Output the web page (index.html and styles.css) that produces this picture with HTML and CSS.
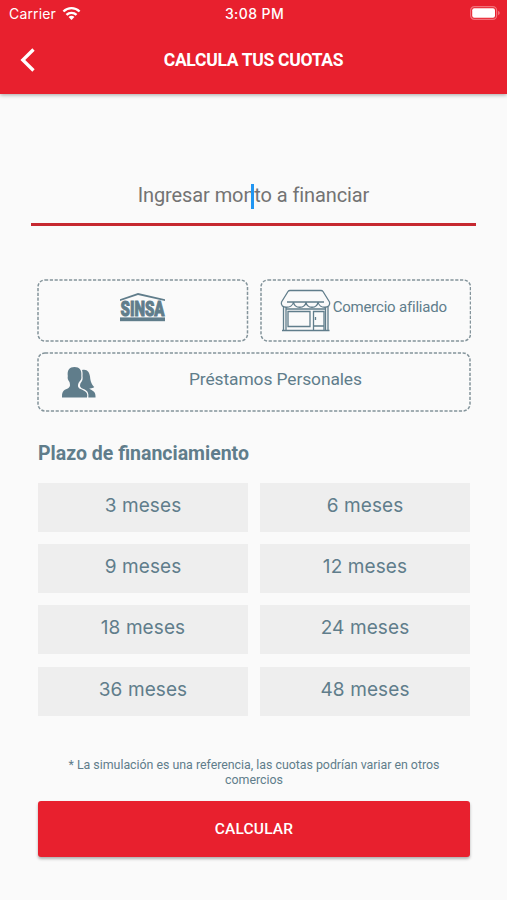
FILE: index.html
```html
<!DOCTYPE html>
<html lang="es">
<head>
    <meta charset="UTF-8">
    <meta name="viewport" content="width=device-width, initial-scale=1.0">
    <title>Calcula tus cuotas</title>
    <link rel="stylesheet" href="styles.css">
</head>
<body>
    <header class="header">
        <div class="status">
            <div class="carrier">
                <span>Carrier</span>
                <svg class="wifi" viewBox="0 0 20 15" fill="none" stroke="#fff" stroke-width="2.5">
                    <path d="M1.500 5.400C6.300 .7 13.700 .7 18.500 5.400"/>
                    <path d="M4.700 9C7.700 6.100 12.300 6.100 15.300 9"/>
                    <path d="M10 14.300L6.900 11.200Q10 8.700 13.100 11.200Z" fill="#fff" stroke="none"/>
                </svg>
            </div>
            <div class="time">3:08 PM</div>
            <svg class="battery" viewBox="0 0 30 14">
                <rect x=".6" y=".6" width="26" height="12.800" rx="3.800" fill="none" stroke="#f2707a" stroke-width="1.200"/>
                <rect x="2.200" y="2.200" width="22.800" height="9.600" rx="2" fill="#fff"/>
                <path d="M28 4.800Q29.800 5.500 29.800 7T28 9.200Z" fill="#f2707a"/>
            </svg>
        </div>
        <div class="titlebar">
            <svg class="back" viewBox="0 0 16 24" fill="none" stroke="#fff" stroke-width="3.300">
                <path d="M13.500 1.500L2.800 12L13.500 22.500"/>
            </svg>
            <h1>CALCULA TUS CUOTAS</h1>
        </div>
    </header>

    <main>
        <div class="monto">
            <span>Ingresar monto a financiar</span>
            <i class="cursor"></i>
        </div>

        <div class="tipos">
            <div class="tipo">
                <svg class="borde"><rect x="1" y="1" rx="7"/></svg>
                <svg class="sinsa" viewBox="0 0 46 29" fill="#607d8b">
                    <path d="M0 6.200L18 0L45 6.200V8L18 1.900L0 8Z"/>
                    <text x=".5" y="23.200" textLength="44" lengthAdjust="spacingAndGlyphs">SINSA</text>
                    <rect y="24.400" width="45" height="3.800"/>
                </svg>
            </div>
            <div class="tipo comercio">
                <svg class="borde"><rect x="1" y="1" rx="7"/></svg>
                <svg class="tienda" viewBox="0 0 51 43" fill="none" stroke="#607d8b" stroke-width="1.300">
                    <path d="M1.500 13L8 2.500Q8.700 1.500 10 1.500H41Q42.300 1.500 43 2.500L49.500 13M7 13H44"/>
                    <path d="M1.500 13C-.5 20 12.500 20 13.500 13C14.500 20 25 20 26 13C27 20 37 20 38 13C39 20 51.500 20 49.500 13"/>
                    <path d="M3.500 18V41.500M6 18V41.500M45.500 18V41.500M48 18V41.500M2 41.500H49.500M6 20H45.500"/>
                    <path d="M8 22.500H30V37.500H8ZM33.500 41V22.500H44V41M33.500 37H44M35.500 28V31"/>
                </svg>
                <span>Comercio afiliado</span>
            </div>
            <div class="tipo ancho">
                <svg class="borde"><rect x="1" y="1" rx="7"/></svg>
                <svg class="personas" viewBox="0 0 34 31" fill="#607d8b">
                    <path d="M12.500 0C7.500 0 5 3 5.800 9C5.200 12 6.300 13.500 7.500 15C8.200 18 8.500 19.500 6.500 21C3 23 0 23 0 29.500V30.500H25C26.500 25 22 23.500 18.500 22C15.500 20.500 15.500 18.500 16.800 15.500C18.300 13.500 20 12 19.300 9C20 3 17.500 0 12.500 0Z"/>
                    <path d="M20 3C25 1.500 27.500 5 28 9.500C28.500 15 30 18 32.300 20C30.500 21.500 28.500 21.500 27.500 21.300C28 23.500 33.500 23 33.500 29V30.500H26.300C27 25.500 25 23.200 21.500 22C18 20.500 17.500 19.500 18.500 16.300C20.500 14 21 12 20.500 9C20.800 6.500 20.500 4.500 20 3Z"/>
                </svg>
                <span>Préstamos Personales</span>
            </div>
        </div>

        <h2>Plazo de financiamiento</h2>
        <div class="plazos">
            <div class="plazo">3 meses</div>
            <div class="plazo">6 meses</div>
            <div class="plazo">9 meses</div>
            <div class="plazo">12 meses</div>
            <div class="plazo">18 meses</div>
            <div class="plazo">24 meses</div>
            <div class="plazo">36 meses</div>
            <div class="plazo">48 meses</div>
        </div>

        <p class="nota">* La simulación es una referencia, las cuotas podrían variar en otros comercios</p>
        <button class="calcular">CALCULAR</button>
    </main>
</body>
</html>
```
FILE: styles.css
```css
* {
    box-sizing: border-box;
}
body {
    margin: 0;
    height: 900px;
    background-color: #fafafa;
    color: #607d8b;
    font-family: Roboto, sans-serif;
}
.header {
    height: 94px;
    background-color: #e8202e;
    color: white;
    box-shadow: 0 1px 4px rgba(0, 0, 0, 0.35);
}
.status {
    display: grid;
    grid-template-columns: 1fr auto 1fr;
    align-items: center;
    height: 26px;
    padding: 0 7px 0 9px;
    font-family: Inter, sans-serif;
    font-size: 14px;
}
.carrier {
    display: flex;
    align-items: center;
    gap: 6px;
    letter-spacing: 0.15px;
}
.wifi {
    width: 19px;
    height: 15px;
}
.time {
    font-weight: 500;
    letter-spacing: 0.4px;
}
.battery {
    width: 30px;
    height: 14px;
    justify-self: end;
}
.titlebar {
    display: grid;
    grid-template-columns: 16px 1fr 16px;
    align-items: center;
    height: 67px;
    padding: 0 20px;
}
.back {
    width: 16px;
    height: 24px;
}
h1 {
    margin: 0;
    text-align: center;
    font-size: 17.5px;
    font-weight: 700;
    letter-spacing: -0.3px;
}
main {
    padding: 76px 36px 0 37px;
}
.monto {
    position: relative;
    height: 56px;
    margin: 0 -5px 0 -6px;
    padding: 13px 0 0;
    border-bottom: 3px solid #c62830;
    text-align: center;
    color: #737373;
    font-size: 20px;
    line-height: 24px;
    letter-spacing: -0.1px;
}
.cursor {
    position: absolute;
    left: 220px;
    top: 14px;
    width: 3px;
    height: 25px;
    background-color: #2196f3;
}
.tipos {
    display: grid;
    grid-template-columns: 1fr 1fr;
    grid-template-rows: 63px 60px;
    gap: 10px 11px;
    margin-top: 53px;
}
.tipo {
    position: relative;
    display: flex;
    align-items: center;
    justify-content: center;
    font-size: 15px;
    letter-spacing: -0.2px;
}
/* borde punteado */
.borde {
    position: absolute;
    top: 0;
    left: 0;
    width: 100%;
    height: 100%;
}
.borde rect {
    width: calc(100% - 2px);
    height: calc(100% - 2px);
    fill: none;
    stroke: #84949b;
    stroke-width: 1.5px;
    stroke-dasharray: 3.2 1.6;
}
.sinsa {
    width: 46px;
    height: 29px;
    margin-bottom: 7px;
    overflow: visible;
}
.sinsa text {
    font: 900 21px Roboto, sans-serif;
    letter-spacing: 0;
    stroke: #607d8b;
    stroke-width: 1px;
}
.comercio {
    padding-right: 4px;
}
.tienda {
    width: 51px;
    height: 43px;
    margin-right: 2px;
}
.tipo span {
    margin-bottom: 6px;
}
.comercio span {
    margin-bottom: 8px;
}
.ancho {
    grid-column: 1 / 3;
    justify-content: flex-start;
    padding-left: 25px;
    font-size: 17.4px;
    letter-spacing: -0.1px;
}
.personas {
    width: 34px;
    height: 31px;
    margin-right: 93px;
}
h2 {
    margin: 29.5px 0 17.5px 1px;
    font-size: 19.5px;
    line-height: 24px;
    font-weight: 700;
}
.plazos {
    display: grid;
    grid-template-columns: 1fr 1fr;
    grid-auto-rows: 49px;
    gap: 12.2px 12px;
    margin: 0 1px;
}
.plazo {
    background-color: #eeeeee;
    text-align: center;
    font-family: Inter, sans-serif;
    font-size: 19px;
    line-height: 45px;
    letter-spacing: 0.1px;
}
.nota {
    margin: 41.5px 22px 14px;
    text-align: center;
    font-size: 12.4px;
    line-height: 15px;
    letter-spacing: -0.02px;
}
.calcular {
    display: block;
    width: calc(100% - 2px);
    height: 56px;
    margin: 0 auto;
    border: none;
    border-radius: 3px;
    background-color: #e8202e;
    box-shadow: 0 2px 3px rgba(0, 0, 0, 0.3);
    color: white;
    font-family: Roboto, sans-serif;
    font-size: 15.5px;
    font-weight: 500;
    letter-spacing: 0.15px;
    padding-bottom: 2px;
}
```
